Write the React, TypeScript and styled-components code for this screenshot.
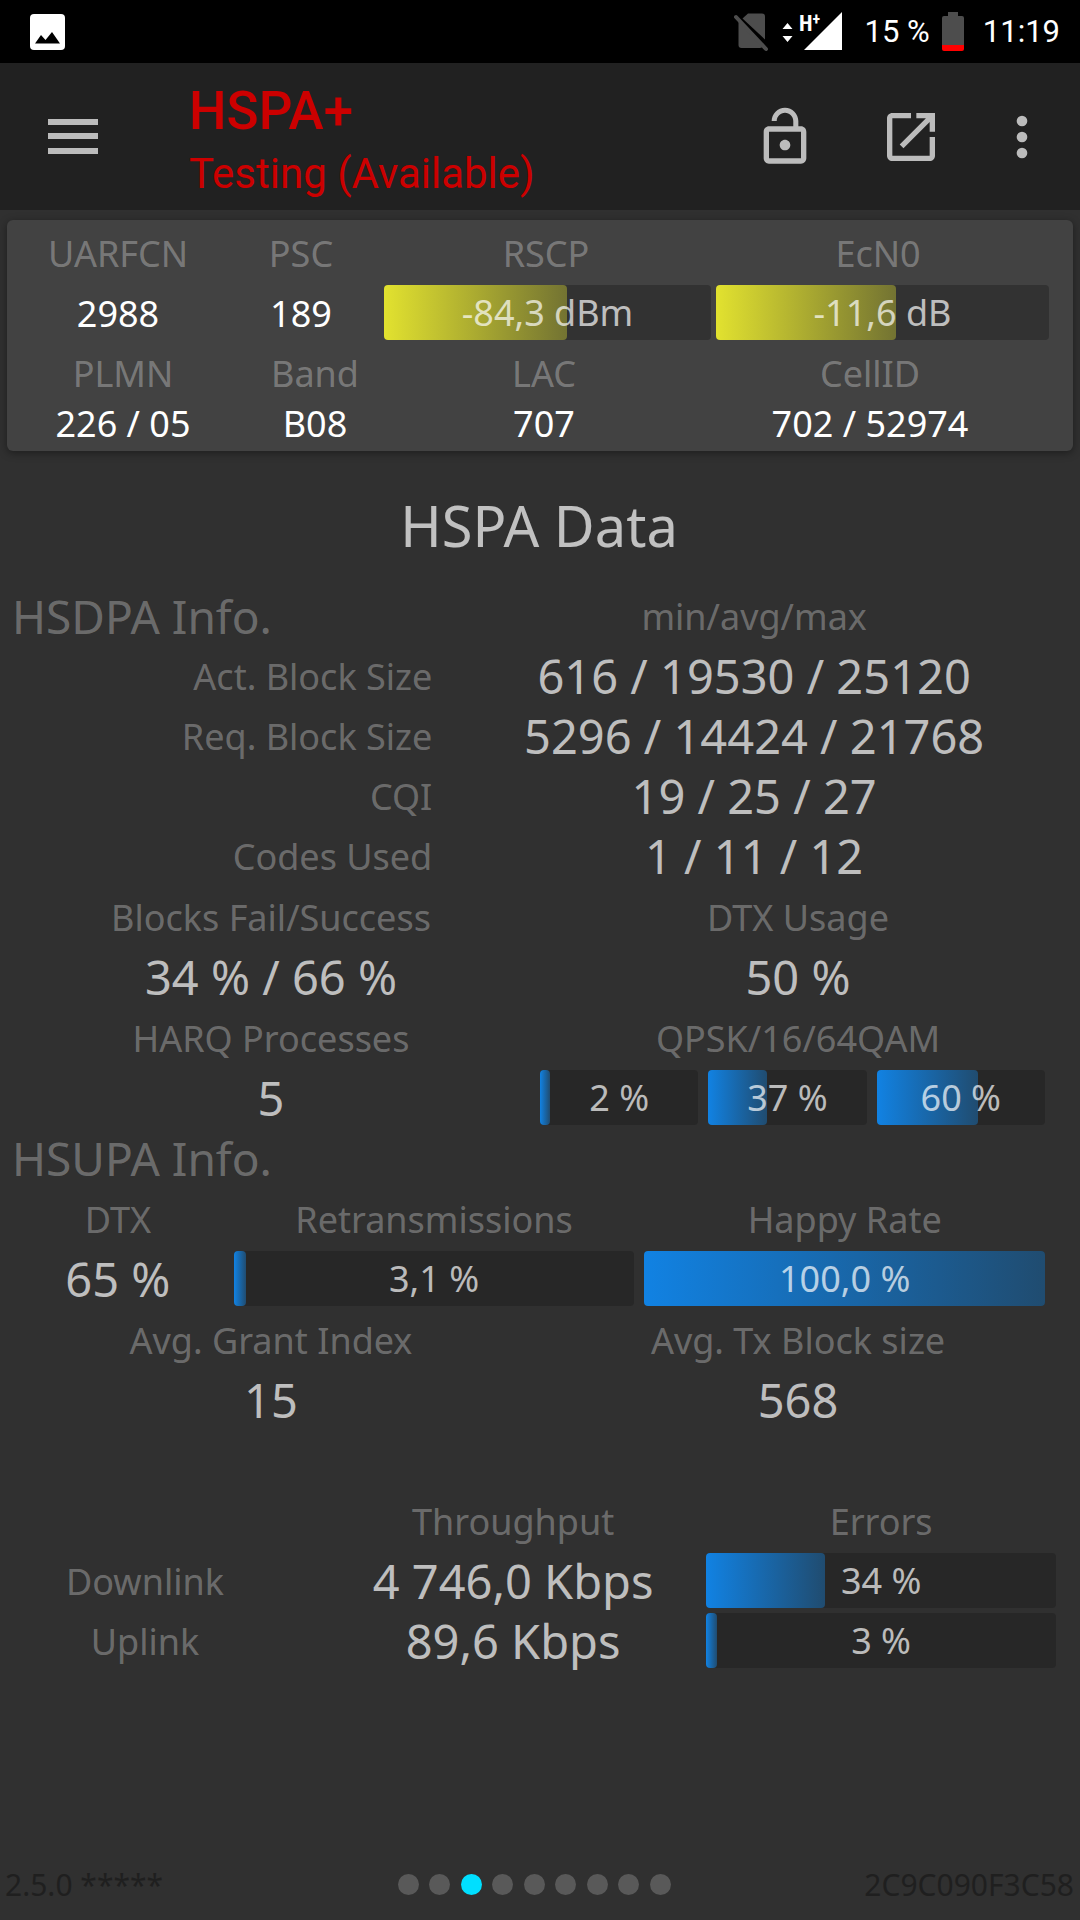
import React from "react";
import styled, { createGlobalStyle } from "styled-components";

const GlobalStyle = createGlobalStyle`
  *, *::before, *::after { box-sizing: border-box; }
  body {
    margin: 0;
    background: #303030;
    font-family: "Noto Sans", "Open Sans", sans-serif;
  }
`;

const Screen = styled.div`
  display: flex;
  flex-direction: column;
  min-height: 100vh;
  background: #303030;
  color: rgba(255, 255, 255, 0.7);
`;

const StatusBar = styled.div`
  display: flex;
  align-items: center;
  justify-content: space-between;
  height: 63px;
  padding: 0 20px 0 30px;
  background: #000;
  color: #fff;
  font: 400 31px/38px Roboto, sans-serif;
`;

const StatusGroup = styled.div`
  display: flex;
  align-items: center;
`;

const Spacer = styled.span<{ $w: number }>`
  width: ${(p) => p.$w}px;
`;

const AppBar = styled.header`
  display: flex;
  align-items: center;
  height: 147px;
  padding: 0 26px 0 41px;
  background: #212121;
`;

const IconButton = styled.button<{ $gap?: number }>`
  display: block;
  padding: 0;
  margin: 0 0 0 ${(p) => p.$gap ?? 0}px;
  border: 0;
  background: none;
  color: #bcbcbc;
  line-height: 0;
  cursor: pointer;
`;

const Heading = styled.div`
  flex: 1;
  padding: 10px 0 0 84px;
  font-family: Roboto, sans-serif;
  color: #cc0000;
`;

const Network = styled.h1`
  margin: 0;
  font-size: 53px;
  font-weight: 500;
  line-height: 64px;
`;

const Subtitle = styled.p`
  margin: 0;
  font-size: 42px;
  line-height: 62px;
`;

const Card = styled.section`
  margin: 10px 7px 0;
  padding: 4px 21px 7px 9px;
  border-radius: 6px;
  background: #424242;
  box-shadow: 0 2px 8px rgba(0, 0, 0, 0.4);
`;

const Columns = styled.div<{ $cols: string; $gap?: number }>`
  display: grid;
  grid-template-columns: ${(p) => p.$cols};
  column-gap: ${(p) => p.$gap ?? 0}px;
`;

const Label = styled.div`
  font-size: 36px;
  font-weight: 400;
  line-height: 60px;
  color: rgba(255, 255, 255, 0.3);
  text-align: center;
  white-space: nowrap;
`;

const CellValue = styled.div<{ $short?: boolean }>`
  font-size: 36px;
  line-height: ${(p) => (p.$short ? 40 : 60)}px;
  color: #fff;
  text-align: center;
  white-space: nowrap;
`;

const Value = styled.div`
  font-size: 47px;
  line-height: 58px;
  padding-bottom: 2px;
  text-align: center;
  white-space: nowrap;
`;

const Body = styled.main`
  padding: 0 4px 0 12px;
`;

const PageTitle = styled.h2`
  margin: 0;
  padding: 34px 10px 22px 0;
  font-size: 56px;
  font-weight: 400;
  line-height: 80px;
  text-align: center;
`;

const SectionTitle = styled.h3`
  margin: 0;
  font-size: 46px;
  font-weight: 400;
  line-height: 58px;
  padding-bottom: 2px;
  color: rgba(255, 255, 255, 0.3);
  text-align: left;
`;

const Group = styled.section<{ $right?: number; $top?: number }>`
  padding-right: ${(p) => p.$right ?? 0}px;
  margin-top: ${(p) => p.$top ?? 1}px;
`;

const Table = styled.table`
  width: 100%;
  table-layout: fixed;
  border-collapse: collapse;

  th,
  td {
    height: 60px;
    padding: 0;
    font-weight: 400;
  }
`;

const Col = styled.col<{ $w: string }>`
  width: ${(p) => p.$w};
`;

const RightLabel = styled(Label)`
  text-align: right;
`;

const RowLabel = styled(Label)`
  padding-right: 42px;
`;

const Track = styled.div<{ $light?: boolean }>`
  position: relative;
  height: 55px;
  margin: ${(p) => (p.$light ? "1px 3px 0 2px" : "1px 0 4px")};
  border-radius: 4px;
  background: ${(p) => (p.$light ? "#323232" : "#272727")};
  font-size: 36px;
  line-height: 55px;
  text-align: center;
  white-space: nowrap;
`;

const Fill = styled.div<{ $light?: boolean }>`
  position: absolute;
  inset: 0 auto 0 0;
  min-width: 10px;
  border-radius: 4px;
  background: ${(p) =>
    p.$light
      ? "linear-gradient(90deg, #e2e22f, #737332)"
      : "linear-gradient(90deg, #1182e3, #204c70)"};
`;

const BarText = styled.span`
  position: relative;
`;

const QamBars = styled(Columns)`
  padding-right: 11px;
`;

const Footer = styled.footer`
  display: grid;
  grid-template-columns: 392fr 273px 402fr;
  align-items: center;
  height: 71px;
  margin-top: auto;
  padding: 0 6px 0 5px;
  font-size: 30px;
  line-height: 40px;
  color: #1f1f1f;
`;

const FooterEnd = styled.span`
  text-align: right;
`;

const Pager = styled.nav`
  display: flex;
  justify-content: space-between;
`;

const Dot = styled.button<{ $active: boolean }>`
  width: 21px;
  height: 21px;
  padding: 0;
  border: 0;
  border-radius: 50%;
  background: ${(p) => (p.$active ? "#00dfff" : "#595959")};
`;

function Bar({ value, percent, light }: { value: string; percent: number; light?: boolean }) {
  return (
    <Track $light={light}>
      <Fill $light={light} style={{ width: `${percent}%` }} />
      <BarText>{value}</BarText>
    </Track>
  );
}

function Pair({ items }: { items: [string, React.ReactNode][] }) {
  return (
    <Group $right={20}>
      <Columns $cols="518fr 516fr" $gap={10}>
        {items.map(([label, value]) => (
          <div key={label}>
            <Label>{label}</Label>
            {value}
          </div>
        ))}
      </Columns>
    </Group>
  );
}

const hsdpaRows = [
  ["Act. Block Size", "616 / 19530 / 25120"],
  ["Req. Block Size", "5296 / 14424 / 21768"],
  ["CQI", "19 / 25 / 27"],
  ["Codes Used", "1 / 11 / 12"],
];

const linkRows = [
  { name: "Downlink", rate: "4 746,0 Kbps", errors: 34 },
  { name: "Uplink", rate: "89,6 Kbps", errors: 3 },
];

export default function App() {
  const [page, setPage] = React.useState(2);

  return (
    <Screen>
      <GlobalStyle />
      <StatusBar>
        <svg width="35" height="36" viewBox="0 0 35 36">
          <rect width="35" height="36" rx="4" fill="#fff" />
          <path d="M5 29.500L11 21l4.500 5L22 18l8 11.500z" fill="#000" />
        </svg>
        <StatusGroup>
          <svg width="109" height="60" viewBox="0 -10 109 60">
            <path d="M14 1.500h14q3 0 3 3v23L8.500 6.500z" fill="#4d4d4d" />
            <path d="M4.500 7.500L29 34q-1 2-3 2H7.500q-3 0-3-3z" fill="#4d4d4d" />
            <path d="M2 5L32 37" stroke="#4d4d4d" strokeWidth="4" strokeLinecap="round" />
            <path d="M48.500 17l5-6 5 6zM48.500 24h10l-5 6z" fill="#fff" />
            <path d="M70 38L108 0v38z" fill="#fff" />
            <text
              x="65"
              y="19"
              fill="#fff"
              fontFamily="'Roboto Condensed', 'Liberation Sans Narrow', Roboto, sans-serif"
              fontSize="22"
              fontWeight="700"
            >
              H
              <tspan fontSize="16" dy="-6">
                +
              </tspan>
            </text>
          </svg>
          <Spacer $w={22} />
          <span>15 %</span>
          <Spacer $w={12} />
          <svg width="22" height="39" viewBox="0 0 22 39">
            <path d="M6 0h10v4h4q2 0 2 2v27H0V6q0-2 2-2h4z" fill="#4d4d4d" />
            <path d="M0 33h22v4q0 2-2 2H2q-2 0-2-2z" fill="#f00" />
          </svg>
          <Spacer $w={19} />
          <span>11:19</span>
        </StatusGroup>
      </StatusBar>

      <AppBar>
        <IconButton aria-label="Menu">
          <svg width="64" height="64" viewBox="0 0 64 64" fill="currentColor">
            <path d="M7 14h50v6H7zM7 28h50v6H7zM7 43h50v6H7z" />
          </svg>
        </IconButton>
        <Heading>
          <Network>HSPA+</Network>
          <Subtitle>Testing (Available)</Subtitle>
        </Heading>
        <IconButton aria-label="Unlock">
          <svg width="64" height="64" viewBox="0 0 24 24" fill="currentColor">
            <path d="M12 17c1.100 0 2-.9 2-2s-.9-2-2-2-2 .9-2 2 .9 2 2 2zm6-9h-1V6c0-2.760-2.240-5-5-5S7 3.240 7 6h1.900c0-1.710 1.390-3.100 3.100-3.100s3.100 1.390 3.100 3.100v2H6c-1.100 0-2 .9-2 2v10c0 1.100.9 2 2 2h12c1.100 0 2-.9 2-2V10c0-1.100-.9-2-2-2zm0 12H6V10h12v10z" />
          </svg>
        </IconButton>
        <IconButton aria-label="Open in new window" $gap={62}>
          <svg width="64" height="64" viewBox="0 0 24 24" fill="currentColor">
            <path d="M19 19H5V5h7V3H5c-1.110 0-2 .9-2 2v14c0 1.100.89 2 2 2h14c1.100 0 2-.9 2-2v-7h-2v7zM14 3v2h3.590l-9.830 9.830 1.410 1.410L19 6.410V10h2V3h-7z" />
          </svg>
        </IconButton>
        <IconButton aria-label="More options" $gap={47}>
          <svg width="64" height="64" viewBox="0 0 24 24" fill="currentColor">
            <circle cx="12" cy="6" r="2" />
            <circle cx="12" cy="12" r="2" />
            <circle cx="12" cy="18" r="2" />
          </svg>
        </IconButton>
      </AppBar>

      <Card>
        <Columns $cols="204fr 162fr 328fr 336fr 6fr">
          <Label>UARFCN</Label>
          <Label>PSC</Label>
          <Label>RSCP</Label>
          <Label>EcN0</Label>
        </Columns>
        <Columns $cols="204fr 162fr 332fr 338fr">
          <CellValue>2988</CellValue>
          <CellValue>189</CellValue>
          <Bar light value="-84,3 dBm" percent={56} />
          <Bar light value="-11,6 dB" percent={54} />
        </Columns>
        <Columns $cols="214fr 170fr 288fr 364fr">
          <Label>PLMN</Label>
          <Label>Band</Label>
          <Label>LAC</Label>
          <Label>CellID</Label>
          <CellValue $short>226 / 05</CellValue>
          <CellValue $short>B08</CellValue>
          <CellValue $short>707</CellValue>
          <CellValue $short>702 / 52974</CellValue>
        </Columns>
      </Card>

      <Body>
        <PageTitle>HSPA Data</PageTitle>

        <Group $top={0}>
          <Table>
            <colgroup>
              <Col $w="39.5%" />
              <Col $w="60.5%" />
            </colgroup>
            <thead>
              <tr>
                <th scope="col">
                  <SectionTitle>HSDPA Info.</SectionTitle>
                </th>
                <th scope="col">
                  <Label>min/avg/max</Label>
                </th>
              </tr>
            </thead>
            <tbody>
              {hsdpaRows.map(([name, value]) => (
                <tr key={name}>
                  <th scope="row">
                    <RightLabel>{name}</RightLabel>
                  </th>
                  <td>
                    <Value>{value}</Value>
                  </td>
                </tr>
              ))}
            </tbody>
          </Table>
        </Group>

        <Pair
          items={[
            ["Blocks Fail/Success", <Value>34 % / 66 %</Value>],
            ["DTX Usage", <Value>50 %</Value>],
          ]}
        />
        <Pair
          items={[
            ["HARQ Processes", <Value>5</Value>],
            [
              "QPSK/16/64QAM",
              <QamBars $cols="158fr 158fr 168fr" $gap={10}>
                <Bar value="2 %" percent={2} />
                <Bar value="37 %" percent={37} />
                <Bar value="60 %" percent={60} />
              </QamBars>,
            ],
          ]}
        />

        <SectionTitle>HSUPA Info.</SectionTitle>
        <Group $right={31}>
          <Columns $cols="212fr 401fr 401fr" $gap={10}>
            <Label>DTX</Label>
            <Label>Retransmissions</Label>
            <Label>Happy Rate</Label>
            <Value>65 %</Value>
            <Bar value="3,1 %" percent={3} />
            <Bar value="100,0 %" percent={100} />
          </Columns>
        </Group>
        <Pair
          items={[
            ["Avg. Grant Index", <Value>15</Value>],
            ["Avg. Tx Block size", <Value>568</Value>],
          ]}
        />

        <Group $right={20} $top={61}>
          <Table>
            <colgroup>
              <Col $w="29.5%" />
              <Col $w="37%" />
              <Col $w="33.5%" />
            </colgroup>
            <thead>
              <tr>
                <td />
                <th scope="col">
                  <Label>Throughput</Label>
                </th>
                <th scope="col">
                  <Label>Errors</Label>
                </th>
              </tr>
            </thead>
            <tbody>
              {linkRows.map((row) => (
                <tr key={row.name}>
                  <th scope="row">
                    <RowLabel>{row.name}</RowLabel>
                  </th>
                  <td>
                    <Value>{row.rate}</Value>
                  </td>
                  <td>
                    <Bar value={`${row.errors} %`} percent={row.errors} />
                  </td>
                </tr>
              ))}
            </tbody>
          </Table>
        </Group>
      </Body>

      <Footer>
        <span>2.5.0 *****</span>
        <Pager aria-label="Pages">
          {Array.from({ length: 9 }, (_, i) => (
            <Dot
              key={i}
              $active={i === page}
              aria-label={`Page ${i + 1}`}
              onClick={() => setPage(i)}
            />
          ))}
        </Pager>
        <FooterEnd>2C9C090F3C58</FooterEnd>
      </Footer>
    </Screen>
  );
}
